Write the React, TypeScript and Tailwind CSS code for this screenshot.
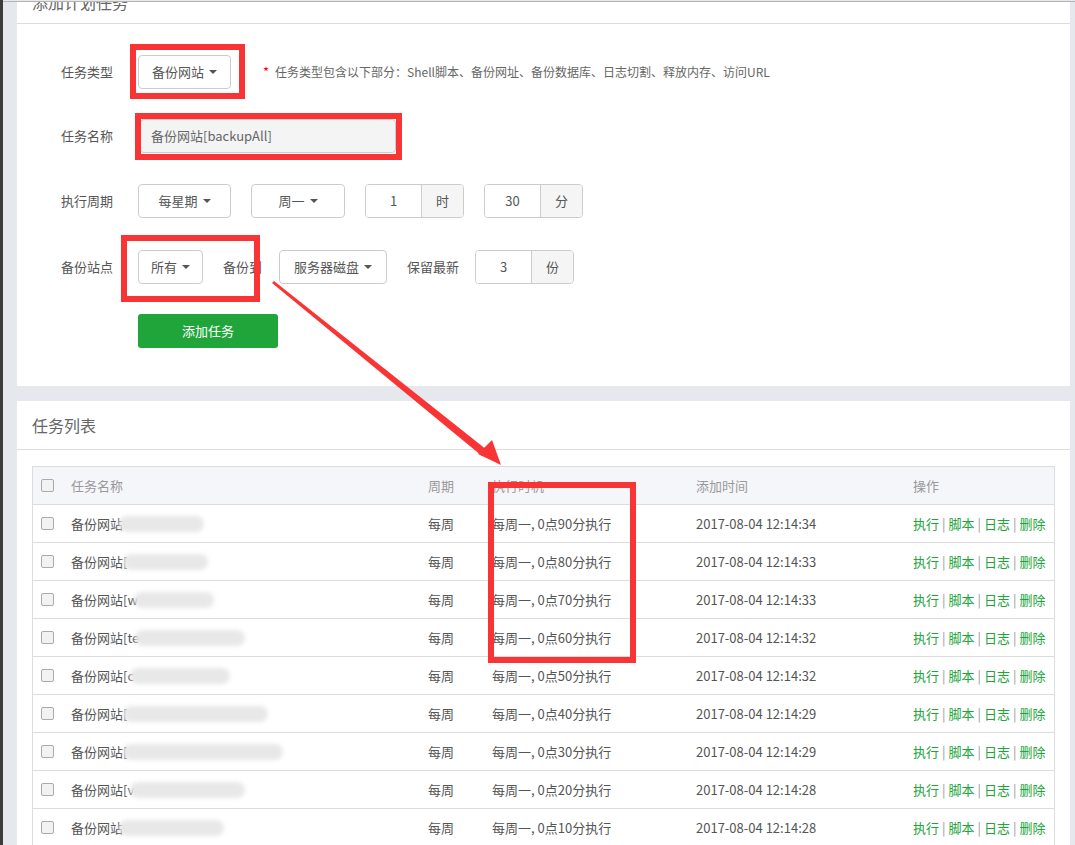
import React from 'react';

const font = { fontFamily: '"Microsoft YaHei", "Noto Sans CJK SC", "Liberation Sans", sans-serif' };

const Caret = () => (
  <span className="ml-[5px] inline-block h-0 w-0 border-x-[4px] border-t-[4px] border-x-transparent border-t-[#555] align-middle" />
);

const DropBtn = ({ label, width }: { label: string; width: string }) => (
  <button className={`${width} h-[34px] rounded-[4px] border border-[#ccc] bg-white text-[13px] text-[#555] flex items-center justify-center`}>
    {label}
    <Caret />
  </button>
);

const AddonInput = ({ value, unit }: { value: string; unit: string }) => (
  <div className="flex h-[34px] w-[99px] rounded-[4px] border border-[#ccc] overflow-hidden">
    <div className="w-[55px] flex items-center justify-center text-[13px] text-[#555] bg-white">{value}</div>
    <div className="flex-1 flex items-center justify-center border-l border-[#ccc] bg-[#f5f5f5] text-[13px] text-[#555]">{unit}</div>
  </div>
);

const Check = () => <span className="inline-block h-[13px] w-[13px] rounded-[2px] border border-[#aaa] bg-[#f2f2f2]" />;

const Sep = () => <span className="mx-[3px] text-[#999]">|</span>;

const rows = [
  { pre: '备份网站', blob: 'w-[85px]', min: 90, t: '12:14:34' },
  { pre: '备份网站[', blob: 'w-[85px]', min: 80, t: '12:14:33' },
  { pre: '备份网站[w', blob: 'w-[80px]', min: 70, t: '12:14:33' },
  { pre: '备份网站[te', blob: 'w-[110px]', min: 60, t: '12:14:32' },
  { pre: '备份网站[c', blob: 'w-[100px]', min: 50, t: '12:14:32' },
  { pre: '备份网站[', blob: 'w-[145px]', min: 40, t: '12:14:29' },
  { pre: '备份网站[', blob: 'w-[160px]', min: 30, t: '12:14:29' },
  { pre: '备份网站[v', blob: 'w-[115px]', min: 20, t: '12:14:28' },
  { pre: '备份网站', blob: 'w-[105px]', min: 10, t: '12:14:28' },
];

const cols = 'grid grid-cols-[30px_357px_64px_204px_217px_1fr]';

export default function App() {
  return (
    <div className="relative h-[845px] w-[1075px] overflow-hidden bg-[#e5e8ec]" style={font}>
      <div className="flex h-full">
        <div className="w-[3px] bg-[#3c3c3c]" />
        <div className="flex-1 pl-[14px] pr-[5px] flex flex-col border-t border-[#b5b5b5] mt-[1px]">
          {/* add task card */}
          <div className="bg-white h-[384px] shrink-0 flex flex-col">
            <div className="h-[22px] border-b border-[#ddd] overflow-hidden px-[15px]">
              <div className="-mt-[12px] text-[16px] text-[#666]">添加计划任务</div>
            </div>
            <div className="pl-[44px] pt-[31px] flex flex-col text-[13px] text-[#555]">
              <div className="flex items-center h-[34px]">
                <span className="w-[77px]">任务类型</span>
                <DropBtn label="备份网站" width="w-[93px]" />
                <span className="ml-[32px] text-[#f00]">*</span>
                <span className="ml-[6px] text-[12px] text-[#666]">任务类型包含以下部分：Shell脚本、备份网址、备份数据库、日志切割、释放内存、访问URL</span>
              </div>
              <div className="flex items-center h-[34px] mt-[30px]">
                <span className="w-[79px]">任务名称</span>
                <div className="w-[256px] h-[34px] rounded-[4px] border border-[#ccc] bg-[#f4f4f4] flex items-center px-[10px] text-[#666]">备份网站[backupAll]</div>
              </div>
              <div className="flex items-center h-[34px] mt-[31px]">
                <span className="w-[77px]">执行周期</span>
                <DropBtn label="每星期" width="w-[93px]" />
                <div className="ml-[20px]"><DropBtn label="周一" width="w-[94px]" /></div>
                <div className="ml-[20px]"><AddonInput value="1" unit="时" /></div>
                <div className="ml-[20px]"><AddonInput value="30" unit="分" /></div>
              </div>
              <div className="flex items-center h-[34px] mt-[32px]">
                <span className="w-[77px]">备份站点</span>
                <DropBtn label="所有" width="w-[65px]" />
                <span className="ml-[20px] w-[36px] whitespace-nowrap">备份到</span>
                <div className="ml-[20px]"><DropBtn label="服务器磁盘" width="w-[108px]" /></div>
                <span className="ml-[20px]">保留最新</span>
                <div className="ml-[16px]"><AddonInput value="3" unit="份" /></div>
              </div>
              <div className="mt-[30px] ml-[77px]">
                <button className="w-[140px] h-[34px] rounded-[3px] bg-[#20a53a] text-white text-[13px]">添加任务</button>
              </div>
            </div>
          </div>
          {/* task list card */}
          <div className="mt-[15px] bg-white flex-1">
            <div className="h-[49px] border-b border-[#ddd] flex items-center px-[15px] text-[16px] text-[#666]">任务列表</div>
            <div className="px-[15px] pt-[16px]">
              <div className="border border-[#ddd] text-[13px]">
                <div className={`${cols} h-[38px] items-center bg-[#f5f6fa] text-[#999] border-b border-[#ddd]`}>
                  <div className="pl-[8px] flex"><Check /></div>
                  <div className="pl-[8px]">任务名称</div>
                  <div className="pl-[8px]">周期</div>
                  <div className="pl-[8px]">执行时机</div>
                  <div className="pl-[8px]">添加时间</div>
                  <div className="pl-[8px]">操作</div>
                </div>
                {rows.map((r, i) => (
                  <div key={i} className={`${cols} h-[38px] items-center text-[#555] border-b border-[#ddd]`}>
                    <div className="pl-[8px] flex"><Check /></div>
                    <div className="pl-[8px] flex items-center">
                      <span>{r.pre}</span>
                      <span className={`inline-block h-[16px] ${r.blob} rounded-full bg-[#e8e8e8] blur-[2px] -ml-[4px]`} />
                    </div>
                    <div className="pl-[8px]">每周</div>
                    <div className="pl-[8px]">每周一, 0点{r.min}分执行</div>
                    <div className="pl-[8px]">2017-08-04 {r.t}</div>
                    <div className="pl-[8px] text-[#20a53a] whitespace-nowrap">
                      执行<Sep />脚本<Sep />日志<Sep />删除
                    </div>
                  </div>
                ))}
              </div>
            </div>
          </div>
        </div>
      </div>
      {/* annotation overlay */}
      <svg className="absolute inset-0 pointer-events-none" width="1075" height="845" viewBox="0 0 1075 845">
        <g fill="none" stroke="#f93434" strokeWidth="6">
          <rect x="133" y="47" width="109" height="49" />
          <rect x="138" y="116" width="261" height="41" />
          <rect x="124" y="238" width="133" height="61" />
          <rect x="491" y="485" width="142" height="175" />
        </g>
        <polygon points="272,283 274,281 487,450 482,456" fill="#f93434" />
        <polygon points="501,465 478,454 492,440" fill="#f93434" />
      </svg>
    </div>
  );
}
